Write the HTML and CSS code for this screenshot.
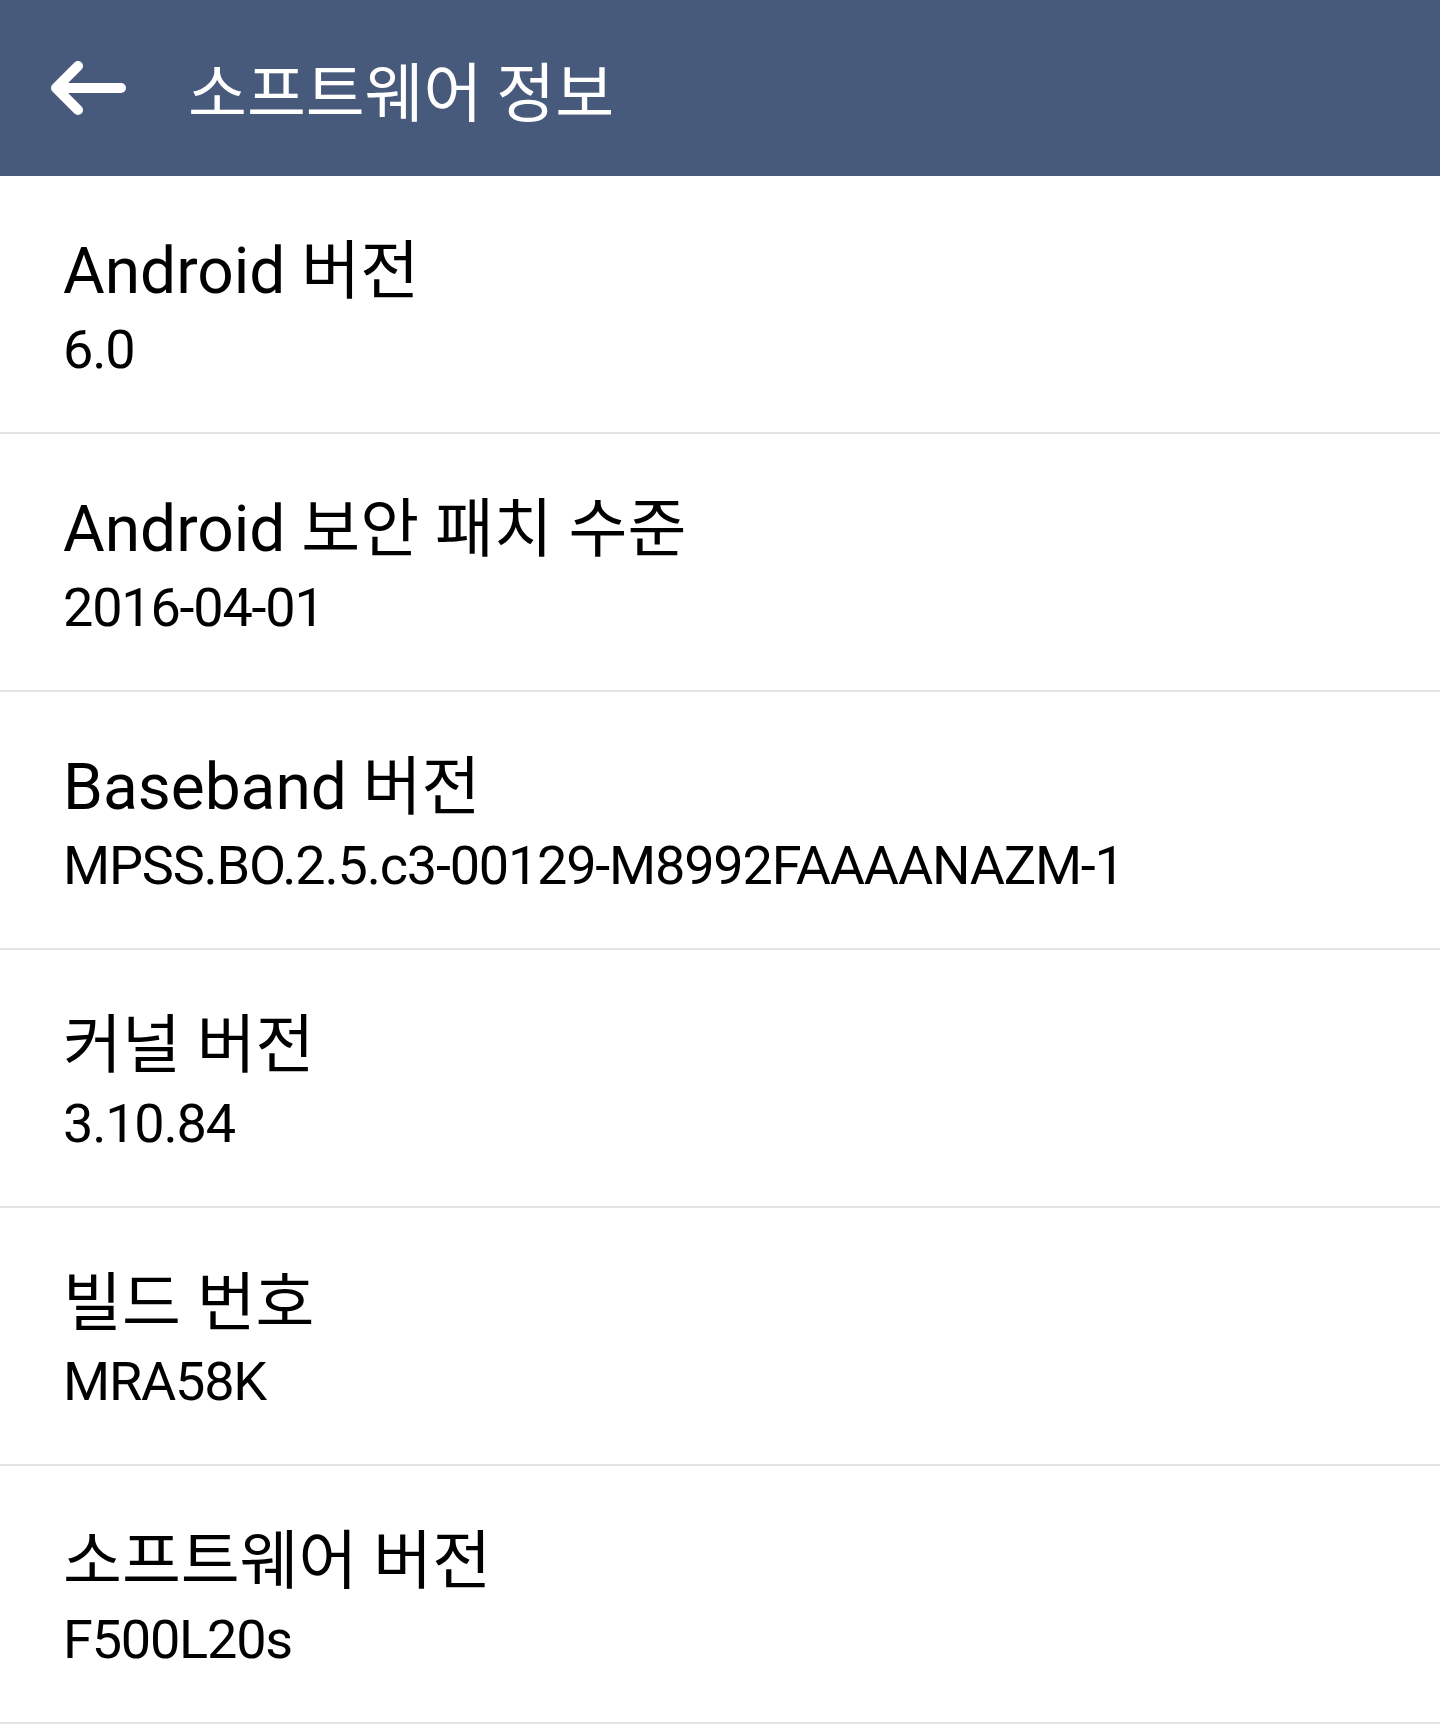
FILE: index.html
```html
<!DOCTYPE html>
<html lang="ko">

<head>
    <meta charset="UTF-8">
    <meta name="viewport" content="width=device-width, initial-scale=1.0">
    <title>소프트웨어 정보</title>
    <link rel="stylesheet" href="styles.css">
</head>

<body>
    <header class="appbar">
        <svg class="back" width="84" height="70" viewBox="0 0 84 70">
            <path d="M12 35 L77 35 M12 35 L34 13 M12 35 L34 57" fill="none" stroke="#fff" stroke-width="10" stroke-linecap="round" stroke-linejoin="round"/>
        </svg>
        <h1 class="appbar-title">소프트웨어 정보</h1>
    </header>

    <ul class="info-list">
        <li class="info-row">
            <div class="info-title">Android 버전</div>
            <div class="info-value">6.0</div>
        </li>
        <li class="info-row">
            <div class="info-title">Android 보안 패치 수준</div>
            <div class="info-value">2016-04-01</div>
        </li>
        <li class="info-row">
            <div class="info-title">Baseband 버전</div>
            <div class="info-value">MPSS.BO.2.5.c3-00129-M8992FAAAANAZM-1</div>
        </li>
        <li class="info-row">
            <div class="info-title">커널 버전</div>
            <div class="info-value">3.10.84</div>
        </li>
        <li class="info-row">
            <div class="info-title">빌드 번호</div>
            <div class="info-value">MRA58K</div>
        </li>
        <li class="info-row">
            <div class="info-title">소프트웨어 버전</div>
            <div class="info-value">F500L20s</div>
        </li>
    </ul>
</body>

</html>
```

FILE: styles.css
```css
body {
    margin: 0;
    padding: 0;
    background-color: #fff;
    font-family: Roboto, "Noto Sans CJK KR", sans-serif;
    color: #000;
}

.appbar {
    height: 176px;
    background-color: #475a7b;
    display: flex;
    align-items: center;
    padding-left: 44px;
    box-sizing: border-box;
}

.back {
    display: block;
}

.appbar-title {
    margin: 0 0 0 60px;
    font-family: "Noto Sans CJK KR", sans-serif;
    font-weight: 400;
    font-size: 64px;
    line-height: 80px;
    color: #fff;
    word-spacing: -4px;
}

.info-list {
    list-style: none;
    margin: 0;
    padding: 0;
}

.info-row {
    height: 258px;
    padding: 56px 0 0 63px;
    box-sizing: border-box;
    border-bottom: 2px solid #e4e4e4;
}

.info-title {
    font-size: 64px;
    line-height: 80px;
    white-space: nowrap;
}

.info-value {
    font-size: 54px;
    line-height: 75px;
    letter-spacing: -1.2px;
    white-space: nowrap;
}
```
